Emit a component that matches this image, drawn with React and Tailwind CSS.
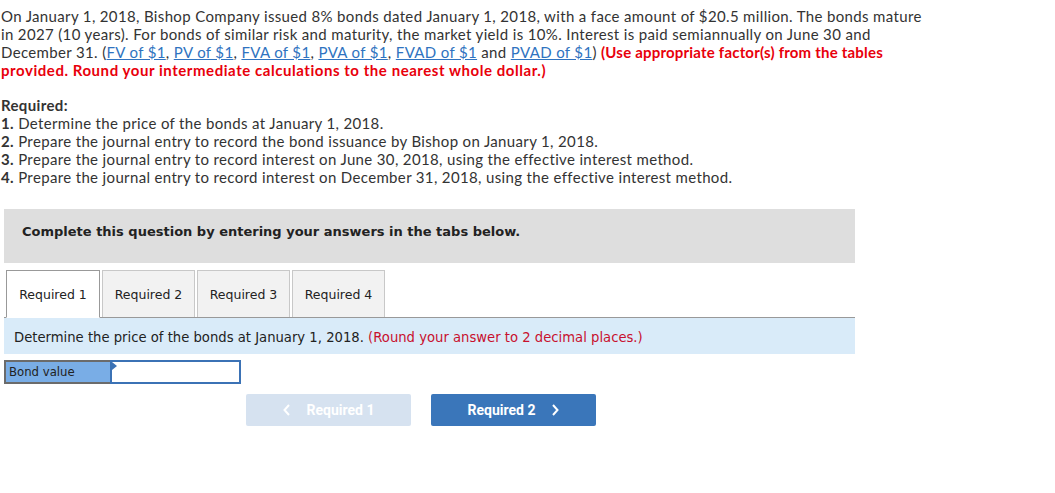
import React from "react";

const body = { fontFamily: "Lato, 'Open Sans', sans-serif" };
const verd = { fontFamily: "'DejaVu Sans', Verdana, sans-serif" };

function L({ children }) {
  return <a className="text-[#2f73c0] underline decoration-[#2f73c0]">{children}</a>;
}

export default function App() {
  return (
    <div className="w-[1055px] h-[493px] bg-white text-[#333] overflow-hidden">
      <div className="pl-[1px] pt-[7px] text-[15px] leading-[18px] tracking-[0.35px] whitespace-nowrap" style={body}>
        <p>
          On January 1, 2018, Bishop Company issued 8% bonds dated January 1, 2018, with a face amount of $20.5 million. The bonds mature<br />
          in 2027 (10 years). For bonds of similar risk and maturity, the market yield is 10%. Interest is paid semiannually on June 30 and<br />
          December 31. (<L>FV of $1</L>, <L>PV of $1</L>, <L>FVA of $1</L>, <L>PVA of $1</L>, <L>FVAD of $1</L> and <L>PVAD of $1</L>){" "}
          <b className="text-[#e8000b] tracking-[0.2px]">(Use appropriate factor(s) from the tables</b><br />
          <b className="text-[#e8000b] tracking-[0.55px]">provided. Round your intermediate calculations to the nearest whole dollar.)</b>
        </p>
        <div className="mt-[17px]">
          <b>Required:</b>
          <p><b>1.</b> Determine the price of the bonds at January 1, 2018.</p>
          <p><b>2.</b> Prepare the journal entry to record the bond issuance by Bishop on January 1, 2018.</p>
          <p><b>3.</b> Prepare the journal entry to record interest on June 30, 2018, using the effective interest method.</p>
          <p><b>4.</b> Prepare the journal entry to record interest on December 31, 2018, using the effective interest method.</p>
        </div>
      </div>

      <div className="ml-[4px] w-[851px] mt-[23px]" style={verd}>
        <div className="h-[54px] bg-[#dedede] flex items-center pl-[18px] pb-[8px] text-[13px] font-bold text-[#222]">
          Complete this question by entering your answers in the tabs below.
        </div>
        <div className="mt-[7px] flex gap-[2px] pl-[2px] border-b border-[#999] h-[48px] items-end text-[12.5px]">
          <div className="w-[94px] h-[48px] -mb-[1px] bg-white border border-[#999] border-b-white flex items-center justify-center pt-[2px] text-[#222]">Required 1</div>
          <div className="w-[93px] h-[47px] bg-[#f2f2f2] border border-[#c8c8c8] border-b-0 flex items-center justify-center pt-[2px] text-[#222]">Required 2</div>
          <div className="w-[93px] h-[47px] bg-[#f2f2f2] border border-[#c8c8c8] border-b-0 flex items-center justify-center pt-[2px] text-[#222]">Required 3</div>
          <div className="w-[93px] h-[47px] bg-[#f2f2f2] border border-[#c8c8c8] border-b-0 flex items-center justify-center pt-[2px] text-[#222]">Required 4</div>
        </div>
        <div className="h-[36px] bg-[#d9ebf9] flex items-center pl-[10px] pt-[3px] text-[13.2px] text-[#222]">
          Determine the price of the bonds at January 1, 2018.&nbsp;<span className="text-[#c8102e]">(Round your answer to 2 decimal places.)</span>
        </div>
      </div>

      <div className="ml-[4px] mt-[6px] flex h-[24px]">
        <div className="w-[106px] bg-[#79ade6] border-2 border-[#6b6b6b] border-r-0 flex items-center pl-[3px] text-[13px] text-[#222]" style={{ fontFamily: "'Liberation Sans Narrow', 'DejaVu Sans Condensed', sans-serif" }}>
          Bond value
        </div>
        <div className="relative w-[131px] bg-white border-2 border-[#3b72b5]">
          <div className="absolute left-0 top-0 w-0 h-0 border-t-[4px] border-b-[4px] border-l-[5px] border-t-transparent border-b-transparent border-l-[#3b72b5]"></div>
        </div>
      </div>

      <div className="flex gap-[20px] ml-[246px] mt-[10px] text-[14px] font-bold" style={{ fontFamily: "Roboto, 'Liberation Sans', sans-serif" }}>
        <div className="w-[165px] h-[32px] rounded-[2px] bg-[#d6e2f0] text-white flex items-center justify-center gap-[16px]">
          <svg width="8" height="12" viewBox="0 0 8 12"><path d="M6 1L1.5 6L6 11" stroke="white" strokeWidth="2" fill="none" /></svg>
          <span>Required 1</span>
        </div>
        <div className="w-[165px] h-[32px] rounded-[2px] bg-[#3a76ba] text-white flex items-center justify-center gap-[16px]">
          <span>Required 2</span>
          <svg width="8" height="12" viewBox="0 0 8 12"><path d="M2 1L6.5 6L2 11" stroke="white" strokeWidth="2" fill="none" /></svg>
        </div>
      </div>
    </div>
  );
}
